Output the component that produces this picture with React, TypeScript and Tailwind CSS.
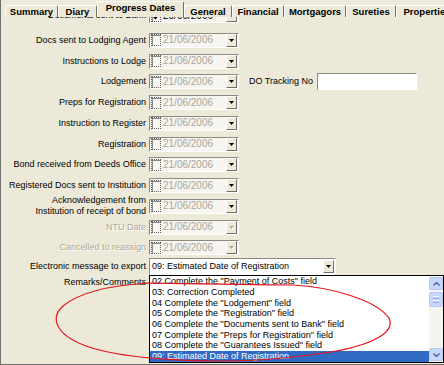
import React from "react";

const font = "font-['Liberation_Sans',Arial,sans-serif]";

const tabs = [
	{ label: "Summary", cls: "w-[53px]" },
	{ label: "Diary", cls: "w-[39px]" },
	{ label: "Progress Dates", cls: "w-[87px]", active: true },
	{ label: "General", cls: "w-[48px]" },
	{ label: "Financial", cls: "w-[52px]" },
	{ label: "Mortgagors", cls: "w-[62px]" },
	{ label: "Sureties", cls: "w-[50px]" },
	{ label: "Properties", cls: "w-[62px]" },
];

const messages = [
	'02 Complete the "Payment of Costs" field',
	"03: Correction Completed",
	'04 Complete the "Lodgement" field',
	'05 Complete the "Registration" field',
	'06 Complete the "Documents sent to Bank" field',
	'07 Complete the "Preps for Registration" field',
	'08 Complete the "Guarantees Issued" field',
	"09: Estimated Date of Registration",
];

function Arrow({ disabled = false }: { disabled?: boolean }) {
	return (
		<svg width="5" height="3" viewBox="0 0 5 3" className="overflow-visible">
			{disabled ? <path d="M1 1h5L3.5 4z" fill="#fff" /> : null}
			<path d="M0 0h5L2.5 3z" fill={disabled ? "#aca899" : "#000"} />
		</svg>
	);
}

function DropButton({ disabled = false }: { disabled?: boolean }) {
	return (
		<div className="flex h-[13px] w-[11px] shrink-0 items-center justify-center border border-t-white border-l-white border-r-[#716f64] border-b-[#716f64] bg-[#ece9d8]">
			<Arrow disabled={disabled} />
		</div>
	);
}

function CheckBox({ checked = false }: { checked?: boolean }) {
	return (
		<div className="ml-px h-[12px] w-[10px] shrink-0 border border-dotted border-[#5f5f5f]">
			<div className="flex h-full w-full items-center justify-center border-t border-l border-t-[#8a8a8a] border-l-[#8a8a8a]">
				{checked ? (
					<svg width="7" height="7" viewBox="0 0 7 7">
						<path d="M0.5 3.5l2 2 4-4.5" stroke="#000" strokeWidth="1.4" fill="none" />
					</svg>
				) : null}
			</div>
		</div>
	);
}

function DateField({
	value = "21/06/2006",
	checked = false,
	disabled = false,
}: {
	value?: string;
	checked?: boolean;
	disabled?: boolean;
}) {
	return (
		<div className="flex h-[15px] w-[90px] items-center border border-t-[#8e8b7e] border-l-[#8e8b7e] border-r-white border-b-white bg-[#f6f5f0] pr-px">
			<CheckBox checked={checked} />
			<span
				className={`ml-[2px] text-[10px] leading-none ${
					checked ? "text-black" : "text-[#a8a69b]"
				}`}
			>
				{value}
			</span>
			<div className="ml-auto">
				<DropButton disabled={disabled} />
			</div>
		</div>
	);
}

function Row({
	label,
	className = "h-[20.75px]",
	disabled = false,
	children,
}: {
	label: React.ReactNode;
	className?: string;
	disabled?: boolean;
	children?: React.ReactNode;
}) {
	return (
		<div className={`flex items-center ${className}`}>
			<div
				className={`w-[145px] shrink-0 text-right text-[9px] leading-[11px] ${
					disabled ? "text-[#aca899] [text-shadow:1px_1px_0_#fff]" : "text-black"
				}`}
			>
				{label}
			</div>
			<div className="ml-[3px] flex items-center">{children}</div>
		</div>
	);
}

function ScrollButton({ up = false }: { up?: boolean }) {
	return (
		<div className="flex h-[13px] w-[14px] items-center justify-center rounded-[2px] border border-[#b7c9f3] bg-[#c6d6fc]">
			<svg width="7" height="4" viewBox="0 0 7 4">
				<path
					d={up ? "M0.5 3.5L3.5 0.5L6.5 3.5" : "M0.5 0.5L3.5 3.5L6.5 0.5"}
					stroke="#4d6185"
					strokeWidth="1.3"
					fill="none"
				/>
			</svg>
		</div>
	);
}

function MessageList() {
	return (
		<div className="absolute left-0 top-full z-10 flex h-[88px] w-[295px] border border-black bg-white">
			<div className="flex flex-1 flex-col">
				{messages.map((m, i) => (
					<div
						key={m}
						className={`h-[10.7px] whitespace-nowrap pl-[2px] text-[9px] leading-[10.7px] ${
							i === messages.length - 1 ? "bg-[#316ac5] text-white" : "text-black"
						}`}
					>
						{m}
					</div>
				))}
			</div>
			<div className="flex w-[14px] flex-col bg-[#f4f3ee] pt-px pb-px">
				<ScrollButton up />
				<div className="mt-[2px] flex h-[15px] w-[14px] flex-col items-center justify-center gap-px rounded-[2px] border border-[#b7c9f3] bg-[#c6d6fc]">
					<div className="h-px w-[6px] bg-[#eef3ff]" />
					<div className="h-px w-[6px] bg-[#8fa8e0]" />
					<div className="h-px w-[6px] bg-[#eef3ff]" />
					<div className="h-px w-[6px] bg-[#8fa8e0]" />
				</div>
				<div className="flex-1" />
				<ScrollButton />
			</div>
		</div>
	);
}

export default function App() {
	return (
		<div
			className={`relative h-[365px] w-[444px] overflow-hidden border-l border-b border-l-[#6f6f6f] border-b-[#6f6f6f] bg-[#ece9d8] ${font}`}
		>
			<div className="flex h-[17px] items-start pl-[4px]">
				{tabs.map((t) =>
					t.active ? (
						<div
							key={t.label}
							className={`${t.cls} mt-px flex h-[16px] shrink-0 items-center justify-center rounded-t-[2px] border-t border-l border-r border-t-white border-l-white border-r-[#716f64] pb-[2px] text-[9.5px] font-bold text-black`}
						>
							{t.label}
						</div>
					) : (
						<div
							key={t.label}
							className={`${t.cls} mt-[5px] flex h-[12px] shrink-0 items-center justify-center whitespace-nowrap rounded-t-[2px] border-t border-l border-r border-t-white border-l-white border-r-[#716f64] pt-px text-[9.5px] font-bold text-black`}
						>
							{t.label}
						</div>
					),
				)}
			</div>

			<div className="h-[347px] overflow-hidden">
				<div className="-mt-[16px]">
					<Row label="Documents sent to Bank" className="h-[29px]">
						<DateField value="20/06/2006" checked />
					</Row>
					<Row label="Docs sent to Lodging Agent">
						<DateField />
					</Row>
					<Row label="Instructions to Lodge">
						<DateField />
					</Row>
					<Row label="Lodgement">
						<DateField />
						<span className="ml-[10px] text-[9px] text-black">DO Tracking No</span>
						<div className="ml-[4px] h-[17px] w-[100px] border border-t-[#8e8b7e] border-l-[#8e8b7e] border-r-white border-b-white bg-white" />
					</Row>
					<Row label="Preps for Registration">
						<DateField />
					</Row>
					<Row label="Instruction to Register">
						<DateField />
					</Row>
					<Row label="Registration">
						<DateField />
					</Row>
					<Row label="Bond received from Deeds Office">
						<DateField />
					</Row>
					<Row label="Registered Docs sent to Institution">
						<DateField />
					</Row>
					<Row
						label={
							<>
								Acknowledgement from
								<br />
								Institution of receipt of bond
							</>
						}
					>
						<DateField />
					</Row>
					<Row label="NTU Date" disabled>
						<DateField disabled />
					</Row>
					<Row label="Cancelled to reassign" disabled>
						<DateField disabled />
					</Row>
					<Row label="Electronic message to export" className="h-[17px]">
						<div className="relative">
							<div className="flex h-[17px] w-[187px] items-center border border-t-[#8e8b7e] border-l-[#8e8b7e] border-r-white border-b-white bg-white pr-px">
								<span className="ml-[2px] whitespace-nowrap text-[9px] text-black">
									09: Estimated Date of Registration
								</span>
								<div className="ml-auto">
									<DropButton />
								</div>
							</div>
							<MessageList />
						</div>
					</Row>
					<div className="flex items-start pt-[2px]">
						<div className="w-[145px] shrink-0 text-right text-[9px] leading-[11px] text-black">
							Remarks/Comments
						</div>
					</div>
				</div>
			</div>

			<svg
				className="pointer-events-none absolute left-0 top-0 z-30"
				width="444"
				height="365"
				viewBox="0 0 444 365"
			>
				<path
					d="M147 283 C200 284 250 285 292 285 C330 287 375 300 388 318 C395 333 370 345 330 352 C290 358 250 361 222 361 C180 361 120 358 88 347 C58 337 47 320 62 306 C80 291 115 285 147 283"
					stroke="#e3141b"
					strokeWidth="1.2"
					fill="none"
				/>
			</svg>
		</div>
	);
}
